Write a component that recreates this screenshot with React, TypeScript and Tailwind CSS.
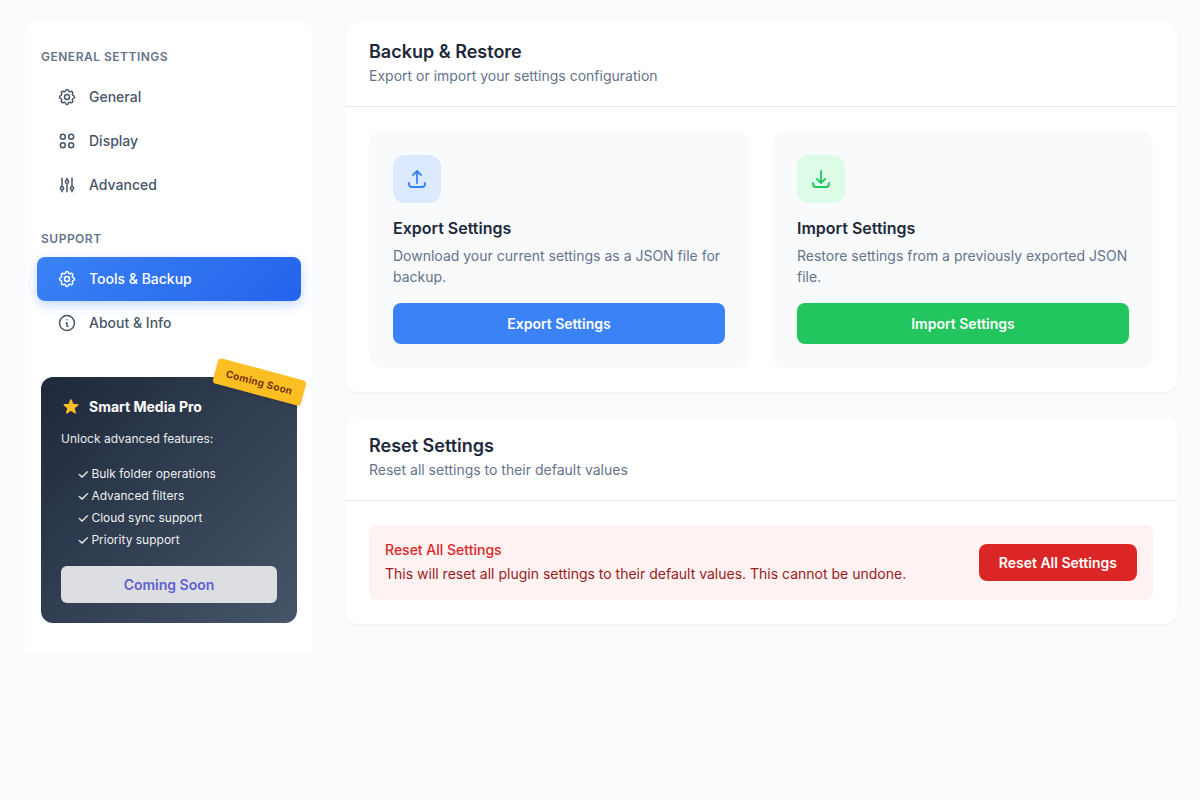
import { ReactNode } from "react";

const iconPaths = {
  cog: [
    "M10.325 4.317c.426-1.756 2.924-1.756 3.35 0a1.724 1.724 0 002.573 1.066c1.543-.94 3.31.826 2.37 2.37a1.724 1.724 0 001.065 2.572c1.756.426 1.756 2.924 0 3.35a1.724 1.724 0 00-1.066 2.573c.94 1.543-.826 3.31-2.37 2.37a1.724 1.724 0 00-2.572 1.065c-.426 1.756-2.924 1.756-3.35 0a1.724 1.724 0 00-2.573-1.066c-1.543.94-3.31-.826-2.37-2.37a1.724 1.724 0 00-1.065-2.572c-1.756-.426-1.756-2.924 0-3.35a1.724 1.724 0 001.066-2.573c-.94-1.543.826-3.31 2.37-2.37.996.608 2.296.07 2.572-1.065z",
    "M15 12a3 3 0 11-6 0 3 3 0 016 0z",
  ],
  circles: [
    "M10 7a3 3 0 11-6 0 3 3 0 016 0z",
    "M20 7a3 3 0 11-6 0 3 3 0 016 0z",
    "M10 17a3 3 0 11-6 0 3 3 0 016 0z",
    "M20 17a3 3 0 11-6 0 3 3 0 016 0z",
  ],
  sliders: [
    "M12 6V4m0 2a2 2 0 100 4m0-4a2 2 0 110 4m-6 8a2 2 0 100-4m0 4a2 2 0 110-4m0 4v2m0-6V4m6 6v10m6-2a2 2 0 100-4m0 4a2 2 0 110-4m0 4v2m0-6V4",
  ],
  info: ["M13 16h-1v-4h-1m1-4h.01M21 12a9 9 0 11-18 0 9 9 0 0118 0z"],
  upload: [
    "M4 16v1a3 3 0 003 3h10a3 3 0 003-3v-1m-4-8l-4-4m0 0L8 8m4-4v12",
  ],
  download: [
    "M4 16v1a3 3 0 003 3h10a3 3 0 003-3v-1m-4-4l-4 4m0 0l-4-4m4 4V4",
  ],
};

type IconName = keyof typeof iconPaths;

function Icon({ name, className }: { name: IconName; className: string }) {
  return (
    <svg
      className={className}
      viewBox="0 0 24 24"
      fill="none"
      stroke="currentColor"
      strokeWidth={1.8}
      strokeLinecap="round"
      strokeLinejoin="round"
      aria-hidden="true"
    >
      {iconPaths[name].map((d) => (
        <path key={d} d={d} />
      ))}
    </svg>
  );
}

interface NavItem {
  label: string;
  icon: IconName;
  active?: boolean;
}

const navSections: { title: string; items: NavItem[] }[] = [
  {
    title: "General Settings",
    items: [
      { label: "General", icon: "cog" },
      { label: "Display", icon: "circles" },
      { label: "Advanced", icon: "sliders" },
    ],
  },
  {
    title: "Support",
    items: [
      { label: "Tools & Backup", icon: "cog", active: true },
      { label: "About & Info", icon: "info" },
    ],
  },
];

const proFeatures = [
  "Bulk folder operations",
  "Advanced filters",
  "Cloud sync support",
  "Priority support",
];

function ProCard() {
  return (
    <div className="relative mx-4 mt-8 rounded-xl bg-linear-135 from-[#1e293b] to-[#475569] p-5 text-white">
      <span className="absolute -top-2 -right-2 rotate-15 rounded bg-[#fbbf24] px-[11px] py-[5px] text-[10px] leading-4 font-bold tracking-[0.3px] text-[#78350f] shadow-[0_2px_4px_rgba(0,0,0,0.1)]">
        Coming Soon
      </span>
      <div className="flex items-center gap-2">
        <svg
          className="size-5 text-[#fbbf24]"
          viewBox="0 0 20 20"
          fill="currentColor"
          aria-hidden="true"
        >
          <path d="M9.049 2.927c.3-.921 1.603-.921 1.902 0l1.07 3.292a1 1 0 00.95.69h3.462c.969 0 1.371 1.24.588 1.81l-2.8 2.034a1 1 0 00-.364 1.118l1.07 3.292c.3.921-.755 1.688-1.54 1.118l-2.8-2.034a1 1 0 00-1.175 0l-2.8 2.034c-.784.57-1.838-.197-1.539-1.118l1.07-3.292a1 1 0 00-.364-1.118L2.98 8.72c-.783-.57-.38-1.81.588-1.81h3.461a1 1 0 00.951-.69l1.07-3.292z" />
        </svg>
        <h3 className="text-sm leading-5 font-bold">Smart Media Pro</h3>
      </div>
      <p className="mt-3 text-xs leading-5 text-white/90">
        Unlock advanced features:
      </p>
      <ul className="mt-3.5 pl-4 text-xs leading-[22px] text-white/95">
        {proFeatures.map((feature) => (
          <li key={feature} className="flex gap-0.5">
            <span className="text-sm leading-[22px]">✓</span>
            {feature}
          </li>
        ))}
      </ul>
      <button
        type="button"
        disabled
        className="mt-[15px] h-[37px] w-full rounded-md bg-[#dddee1] text-sm font-semibold text-[#5d61d0]"
      >
        Coming Soon
      </button>
    </div>
  );
}

function Sidebar() {
  return (
    <aside className="w-72 shrink-0 rounded-t-xl bg-white pt-[25px] pb-[29px]">
      <nav className="flex flex-col gap-[23px] px-3">
        {navSections.map((section) => (
          <div key={section.title}>
            <h2 className="mb-[9px] px-1 text-xs leading-[18px] font-semibold tracking-[0.5px] text-[#64748b] uppercase">
              {section.title}
            </h2>
            {section.items.map((item) => (
              <a
                key={item.label}
                href="#"
                className={
                  item.active
                    ? "flex h-11 items-center gap-3 rounded-lg bg-linear-135 from-[#3b82f6] to-[#2563eb] px-5 text-sm font-medium text-white shadow-[0_4px_12px_rgba(59,130,246,0.3)]"
                    : "flex h-11 items-center gap-3 rounded-lg px-5 text-sm font-medium text-[#475569]"
                }
              >
                <Icon name={item.icon} className="size-5" />
                {item.label}
              </a>
            ))}
          </div>
        ))}
      </nav>
      <ProCard />
    </aside>
  );
}

interface SectionProps {
  title: string;
  description: string;
  children: ReactNode;
}

function Section({ title, description, children }: SectionProps) {
  return (
    <section className="rounded-xl bg-white shadow-[0_1px_3px_rgba(0,0,0,0.05)]">
      <div className="border-b border-[#e2e8f0] px-6 pt-[17px] pb-5">
        <h2 className="text-lg leading-6 font-semibold text-[#1e293b]">
          {title}
        </h2>
        <p className="mt-px text-sm leading-[21px] text-[#64748b]">
          {description}
        </p>
      </div>
      <div className="p-6">{children}</div>
    </section>
  );
}

interface ToolCardProps {
  title: string;
  description: string;
  icon: IconName;
  iconClass: string;
  buttonClass: string;
}

function ToolCard({
  title,
  description,
  icon,
  iconClass,
  buttonClass,
}: ToolCardProps) {
  return (
    <div className="rounded-xl bg-[#f9fafc] p-6">
      <div
        className={`flex size-12 items-center justify-center rounded-xl ${iconClass}`}
      >
        <Icon name={icon} className="size-6" />
      </div>
      <h3 className="mt-[13px] text-base leading-6 font-semibold text-[#1e293b]">
        {title}
      </h3>
      <p className="mt-[5px] text-sm leading-[21px] text-[#64748b]">
        {description}
      </p>
      <button
        type="button"
        className={`mt-4 h-[41px] w-full rounded-lg text-sm font-semibold text-white ${buttonClass}`}
      >
        {title}
      </button>
    </div>
  );
}

export default function App() {
  return (
    <div className="flex min-h-screen items-start gap-8 bg-[#fafbfd] pt-[23px] pr-[23px] pb-6 pl-[25px] font-['Inter',sans-serif]">
      <Sidebar />
      <main className="flex min-w-0 flex-1 flex-col gap-[25px]">
        <Section
          title="Backup & Restore"
          description="Export or import your settings configuration"
        >
          <div className="grid grid-cols-2 gap-6">
            <ToolCard
              title="Export Settings"
              description="Download your current settings as a JSON file for backup."
              icon="upload"
              iconClass="bg-[#dbeafe] text-[#3b82f6]"
              buttonClass="bg-[#3b82f6]"
            />
            <ToolCard
              title="Import Settings"
              description="Restore settings from a previously exported JSON file."
              icon="download"
              iconClass="bg-[#dcfce7] text-[#22c55e]"
              buttonClass="bg-[#22c55e]"
            />
          </div>
        </Section>

        <Section
          title="Reset Settings"
          description="Reset all settings to their default values"
        >
          <div className="flex items-center justify-between gap-4 rounded-lg bg-[#fef2f2] px-4 py-3.5">
            <div className="pb-0.5 text-sm leading-[21px]">
              <h3 className="font-medium text-[#dc2626]">Reset All Settings</h3>
              <p className="mt-[3px] text-[#991b1b]">
                This will reset all plugin settings to their default values.
                This cannot be undone.
              </p>
            </div>
            <button
              type="button"
              className="h-[37px] shrink-0 rounded-lg bg-[#dc2626] px-5 text-sm font-semibold text-white"
            >
              Reset All Settings
            </button>
          </div>
        </Section>
      </main>
    </div>
  );
}
